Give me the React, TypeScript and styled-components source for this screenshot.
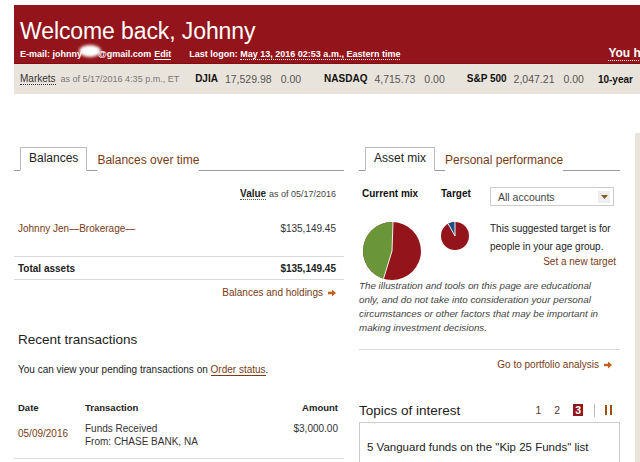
import styled, { createGlobalStyle } from 'styled-components';

const GlobalStyle = createGlobalStyle`
  html, body {
    margin: 0;
    padding: 0;
    background: #fff;
  }
  body {
    font-family: "Liberation Sans", Arial, sans-serif;
    color: #222;
    width: 640px;
    height: 462px;
    overflow: hidden;
  }
`;

const colors = {
  red: '#93141b',
  darkRed: '#7c0e14',
  beige: '#e9e4db',
  link: '#7a3a14',
  arrow: '#c2611a',
  line: '#d9d9d9',
};

const markets = [
  { name: 'DJIA', value: '17,529.98', change: '0.00', gap: 23 },
  { name: 'NASDAQ', value: '4,715.73', change: '0.00', gap: 22 },
  { name: 'S&P 500', value: '2,047.21', change: '0.00', gap: 14 },
];

const App = () => {
  return (
    <>
      <GlobalStyle />
      <StyledPage>
        <StyledHeader>
          <StyledTitle>Welcome back, Johnny</StyledTitle>
          <StyledUserRow>
            <StyledEmail>
              E-mail: johnny<StyledBlur />@gmail.com <StyledUnderline>Edit</StyledUnderline>
            </StyledEmail>
            <StyledLogon>
              Last logon: <StyledDotted>May 13, 2016 02:53 a.m., Eastern time</StyledDotted>
            </StyledLogon>
            <StyledYouHave>You have</StyledYouHave>
          </StyledUserRow>
        </StyledHeader>
        <StyledMarkets>
          <StyledMarketsLabel>Markets</StyledMarketsLabel>
          <StyledAsOf>as of 5/17/2016 4:35 p.m., ET</StyledAsOf>
          {markets.map((m) => (
            <StyledIndex key={m.name} $gap={m.gap}>
              <b>{m.name}</b>
              <span>{m.value}</span>
              <span>{m.change}</span>
            </StyledIndex>
          ))}
          <StyledIndex $gap={0}>
            <b>10-year</b>
          </StyledIndex>
        </StyledMarkets>

        <StyledBody>
          <StyledMain>
            <StyledLeftCol>
              <StyledTabs>
                <StyledTab $active>Balances</StyledTab>
                <StyledTab>Balances over time</StyledTab>
              </StyledTabs>
              <StyledValueHead>
                <StyledDottedDark>Value</StyledDottedDark> <small>as of 05/17/2016</small>
              </StyledValueHead>
              <StyledAccountRow>
                <StyledAccountName>Johnny Jen—Brokerage—</StyledAccountName>
                <span>$135,149.45</span>
              </StyledAccountRow>
              <StyledTotalRow>
                <span>Total assets</span>
                <span>$135,149.45</span>
              </StyledTotalRow>
              <StyledMoreLink $top={7}>
                Balances and holdings <Arrow />
              </StyledMoreLink>

              <StyledSectionTitle>Recent transactions</StyledSectionTitle>
              <StyledNote>
                You can view your pending transactions on <StyledLinkUnder>Order status</StyledLinkUnder>.
              </StyledNote>
              <StyledTxHead>
                <span>Date</span>
                <span>Transaction</span>
                <span>Amount</span>
              </StyledTxHead>
              <StyledTxRow>
                <StyledTxDate>05/09/2016</StyledTxDate>
                <span>
                  Funds Received
                  <br />
                  From: CHASE BANK, NA
                </span>
                <StyledTxAmount>$3,000.00</StyledTxAmount>
              </StyledTxRow>
            </StyledLeftCol>

            <StyledRightCol>
              <StyledTabs>
                <StyledTab $active>Asset mix</StyledTab>
                <StyledTab>Personal performance</StyledTab>
              </StyledTabs>
              <StyledMixGrid>
                <StyledMixLabel>Current mix</StyledMixLabel>
                <StyledMixLabel>Target</StyledMixLabel>
                <StyledSelect>
                  <span>All accounts</span>
                  <StyledSelectBtn>
                    <svg width="7" height="4" viewBox="0 0 7 4">
                      <path d="M0 0h7L3.5 4z" fill="#8a5a2a" />
                    </svg>
                  </StyledSelectBtn>
                </StyledSelect>
                <StyledBigPie>
                  <svg width="60" height="60" viewBox="0 0 60 60">
                    <circle cx="30" cy="30" r="29" fill="#93141b" />
                    <path d="M30 30 L31 1 A29 29 0 0 0 21.5 57.7 Z" fill="#6a9538" />
                    <path d="M31 1 L30 30 L21.5 57.7" stroke="#f2f2f2" strokeWidth="1" fill="none" />
                  </svg>
                </StyledBigPie>
                <StyledSmallPie>
                  <svg width="30" height="30" viewBox="0 0 30 30">
                    <circle cx="15" cy="15" r="14" fill="#93141b" />
                    <path d="M15 15 L15 1 A14 14 0 0 0 8.2 2.8 Z" fill="#1b4f8c" />
                    <path d="M15 1 L15 15 L8.2 2.8" stroke="#f2f2f2" strokeWidth="1" fill="none" />
                  </svg>
                </StyledSmallPie>
                <StyledTargetNote>
                  This suggested target is for
                  <br />
                  people in your age group.
                  <StyledSetTarget>Set a new target</StyledSetTarget>
                </StyledTargetNote>
              </StyledMixGrid>
              <StyledDisclaimer>
                The illustration and tools on this page are educational only, and do not take into
                consideration your personal circumstances or other factors that may be important in
                making investment decisions.
              </StyledDisclaimer>
              <StyledRule />
              <StyledMoreLink $top={9}>
                Go to portfolio analysis <Arrow />
              </StyledMoreLink>
              <StyledTopicsHead>
                <StyledTopicsTitle>Topics of interest</StyledTopicsTitle>
                <StyledPager>
                  <StyledPageNum>1</StyledPageNum>
                  <StyledPageNum>2</StyledPageNum>
                  <StyledPageActive>3</StyledPageActive>
                  <StyledPagerSep />
                  <StyledPause>
                    <i />
                    <i />
                  </StyledPause>
                </StyledPager>
              </StyledTopicsHead>
              <StyledTopicBox>5 Vanguard funds on the "Kip 25 Funds" list</StyledTopicBox>
            </StyledRightCol>
          </StyledMain>
          <StyledSideStrip />
        </StyledBody>
      </StyledPage>
    </>
  );
};

const Arrow = () => (
  <svg width="8" height="8" viewBox="0 0 8 8" style={{ marginLeft: 5 }}>
    <path d="M0 2.8h4V0.5L8 4 4 7.5V5.2H0z" fill={colors.arrow} />
  </svg>
);

export default App;

const StyledPage = styled.div`
  padding: 5px 0 0 14px;
`;

const StyledHeader = styled.div`
  background: ${colors.red};
  color: #fff;
  height: 59px;
  padding: 14px 0 0 6px;
  box-sizing: border-box;
  border-bottom: 1px solid ${colors.darkRed};
`;

const StyledTitle = styled.h1`
  margin: 0;
  font-size: 23px;
  font-weight: normal;
  line-height: 25px;
  letter-spacing: -0.1px;
`;

const StyledUserRow = styled.div`
  display: flex;
  align-items: baseline;
  font-size: 9px;
  font-weight: bold;
  margin-top: 1px;
  white-space: nowrap;
`;

const StyledEmail = styled.span`
  display: inline-flex;
  align-items: baseline;
`;

const StyledBlur = styled.span`
  display: inline-block;
  width: 22px;
  height: 12px;
  background: #fff;
  border-radius: 50%;
  filter: blur(1.5px);
  margin: 0 -3px -3px -3px;
`;

const StyledUnderline = styled.span`
  margin-left: 3px;
  border-bottom: 1px solid #fff;
`;

const StyledLogon = styled.span`
  margin-left: 18px;
`;

const StyledDotted = styled.span`
  border-bottom: 1px dotted #fff;
`;

const StyledYouHave = styled.span`
  margin-left: 208px;
  font-size: 12px;
  border-bottom: 1px dotted #fff;
`;

const StyledMarkets = styled.div`
  background: ${colors.beige};
  height: 30px;
  display: flex;
  align-items: center;
  padding-left: 6px;
  font-size: 10px;
  white-space: nowrap;
  color: #333;
`;

const StyledMarketsLabel = styled.span`
  border-bottom: 1px dotted #333;
  line-height: 11px;
`;

const StyledAsOf = styled.span`
  margin-left: 5px;
  font-size: 9px;
  color: #777;
  margin-right: 16px;
`;

const StyledIndex = styled.span<{ $gap: number }>`
  display: inline-flex;
  gap: 7px;
  margin-right: ${({ $gap }) => $gap}px;
  font-size: 10.5px;

  b {
    color: #111;
    font-size: 10px;
  }
  span {
    color: #555;
  }
  span + span {
    margin-left: 2px;
  }
`;

const StyledBody = styled.div`
  display: flex;
  margin-left: -14px;
`;

const StyledMain = styled.div`
  display: flex;
  gap: 15px;
  padding: 53px 0 0 14px;
  width: 635px;
  box-sizing: border-box;
`;

const StyledSideStrip = styled.div`
  flex: 1;
  background: ${colors.beige};
  margin-top: 39px;
  height: 400px;
`;

const StyledLeftCol = styled.div`
  width: 330px;
  font-size: 10px;
`;

const StyledRightCol = styled.div`
  width: 261px;
  font-size: 10px;
`;

const StyledTabs = styled.div`
  display: flex;
  align-items: flex-end;
  border-bottom: 1px solid #999;
  height: 23px;
`;

const StyledTab = styled.div<{ $active?: boolean }>`
  font-size: 12px;
  padding: 0 ${({ $active }) => ($active ? '8px' : '0')};
  margin-left: ${({ $active }) => ($active ? '6px' : '10px')};
  height: ${({ $active }) => ($active ? '22px' : '21px')};
  line-height: 21px;
  color: ${({ $active }) => ($active ? '#222' : colors.link)};
  border: ${({ $active }) => ($active ? '1px solid #bbb' : 'none')};
  border-bottom: ${({ $active }) => ($active ? '1px solid #fff' : 'none')};
  margin-bottom: -1px;
  background: #fff;
`;

const StyledValueHead = styled.div`
  text-align: right;
  margin-top: 17px;
  padding-right: 8px;
  font-size: 10px;
  font-weight: bold;
  color: #222;

  small {
    font-weight: normal;
    font-size: 9px;
    color: #444;
  }
`;

const StyledDottedDark = styled.span`
  border-bottom: 1px dotted #555;
`;

const StyledAccountRow = styled.div`
  display: flex;
  justify-content: space-between;
  padding: 0 8px 0 4px;
  margin-top: 24px;
  height: 33px;
  border-bottom: 1px solid ${colors.line};
  color: #333;
`;

const StyledAccountName = styled.span`
  color: ${colors.link};
`;

const StyledTotalRow = styled.div`
  display: flex;
  justify-content: space-between;
  align-items: center;
  padding: 0 8px 0 4px;
  height: 22px;
  font-weight: bold;
  border-bottom: 1px solid ${colors.line};
`;

const StyledMoreLink = styled.div<{ $top: number }>`
  display: flex;
  justify-content: flex-end;
  align-items: center;
  padding-right: 8px;
  margin-top: ${({ $top }) => $top}px;
  color: ${colors.link};
  font-size: 10px;
`;

const StyledSectionTitle = styled.div`
  font-size: 13.5px;
  margin-top: 34px;
  padding-left: 4px;
  color: #222;
`;

const StyledNote = styled.div`
  margin-top: 17px;
  padding-left: 4px;
  color: #222;
`;

const StyledLinkUnder = styled.span`
  color: ${colors.link};
  border-bottom: 1px solid ${colors.link};
`;

const StyledTxHead = styled.div`
  display: grid;
  grid-template-columns: 67px 1fr auto;
  padding: 0 6px 0 4px;
  margin-top: 27px;
  font-size: 9.5px;
  font-weight: bold;
`;

const StyledTxRow = styled.div`
  display: grid;
  grid-template-columns: 67px 1fr auto;
  padding: 0 6px 10px 4px;
  margin-top: 9px;
  line-height: 13px;
  color: #333;
  border-bottom: 1px solid ${colors.line};
`;

const StyledTxDate = styled.span`
  color: ${colors.link};
  padding-top: 5px;
`;

const StyledTxAmount = styled.span`
  text-align: right;
`;

const StyledMixGrid = styled.div`
  display: grid;
  grid-template-columns: 79px 49px 1fr;
  margin-top: 17px;
  padding-left: 3px;
`;

const StyledMixLabel = styled.div`
  font-weight: bold;
  font-size: 10px;
  color: #111;
`;

const StyledSelect = styled.div`
  display: flex;
  justify-content: space-between;
  align-items: center;
  height: 19px;
  width: 124px;
  border: 1px solid #ccc;
  margin-top: -1px;
  padding-left: 7px;
  box-sizing: border-box;
  color: #444;
  font-size: 10.5px;
`;

const StyledSelectBtn = styled.div`
  width: 12px;
  height: 12px;
  margin-right: 3px;
  background: #eee;
  display: flex;
  align-items: center;
  justify-content: center;
`;

const StyledBigPie = styled.div`
  margin-top: 15px;
`;

const StyledSmallPie = styled.div`
  margin-top: 15px;
  margin-left: -1px;
`;

const StyledTargetNote = styled.div`
  margin-top: 14px;
  line-height: 18px;
  color: #222;
  white-space: nowrap;
`;

const StyledSetTarget = styled.div`
  text-align: right;
  color: ${colors.link};
  margin-top: -3px;
  padding-right: 4px;
`;

const StyledDisclaimer = styled.div`
  font-style: italic;
  color: #444;
  line-height: 14px;
  font-size: 9.8px;
  margin-top: -4px;
  width: 252px;
`;

const StyledRule = styled.div`
  border-top: 1px solid ${colors.line};
  margin-top: 14px;
`;

const StyledTopicsHead = styled.div`
  display: flex;
  justify-content: space-between;
  align-items: center;
  margin-top: 29px;
  height: 22px;
`;

const StyledTopicsTitle = styled.span`
  font-size: 13.5px;
  color: #222;
`;

const StyledPager = styled.div`
  display: flex;
  align-items: center;
  gap: 13px;
  padding-right: 8px;
  font-size: 10.5px;
`;

const StyledPageNum = styled.span`
  color: #5a3a2a;
`;

const StyledPageActive = styled.span`
  background: ${colors.red};
  color: #fff;
  font-weight: bold;
  padding: 0 2px;
  line-height: 12px;
`;

const StyledPagerSep = styled.span`
  width: 1px;
  height: 13px;
  background: #bbb;
  margin-left: -2px;
`;

const StyledPause = styled.span`
  display: flex;
  gap: 3px;
  margin-left: -3px;

  i {
    width: 2px;
    height: 10px;
    background: #a14e10;
  }
`;

const StyledTopicBox = styled.div`
  margin-top: 1px;
  border: 1px solid #ccc;
  height: 60px;
  padding: 18px 0 0 7px;
  font-size: 11.5px;
  color: #222;
`;
